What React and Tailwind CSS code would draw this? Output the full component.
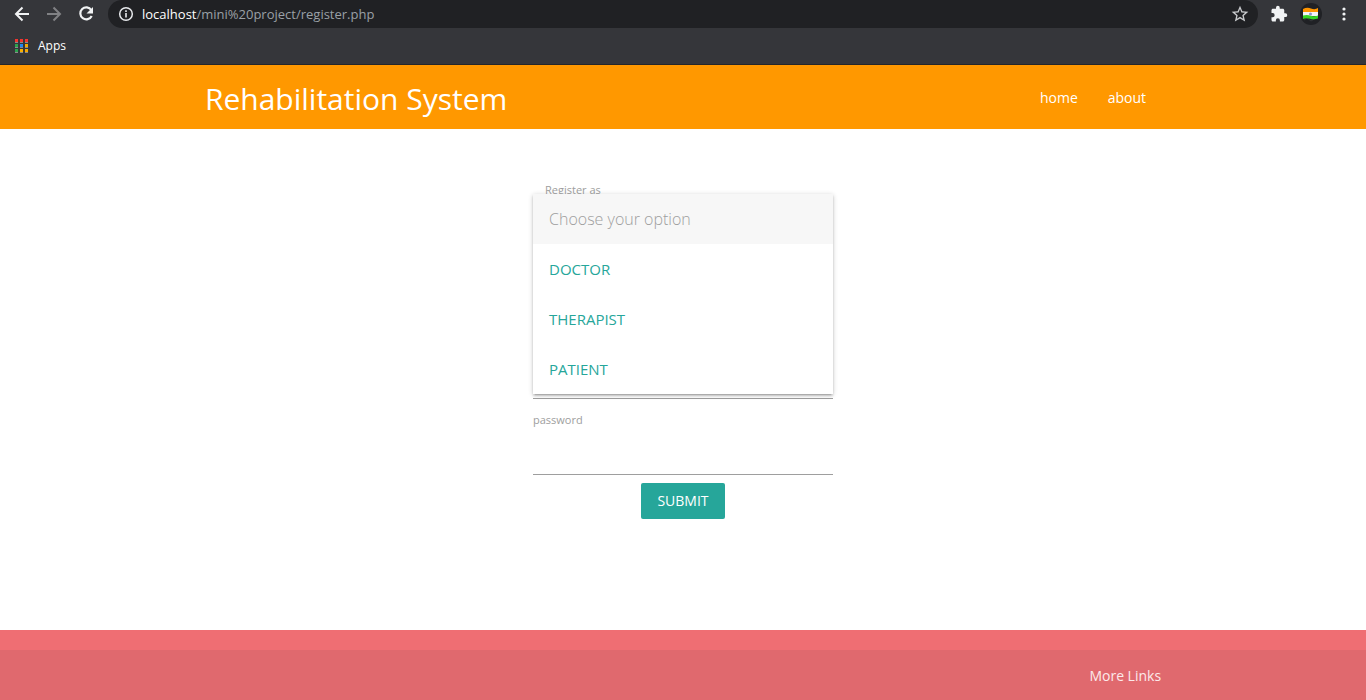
import { useState } from "react";

const appColors = [
  "#f2352f", "#f2352f", "#f2352f",
  "#2ba24c", "#2086f2", "#f5a800",
  "#2ba24c", "#f9b000", "#f5a800",
];

const roles = ["DOCTOR", "THERAPIST", "PATIENT"];

function AppsIcon() {
  return (
    <svg width="14" height="14" viewBox="0 0 14 14" aria-hidden="true">
      {appColors.map((color, i) => (
        <g key={i}>
          <rect x={(i % 3) * 5} y={Math.floor(i / 3) * 5} width="3" height="3" fill={color} />
          <rect x={(i % 3) * 5} y={Math.floor(i / 3) * 5 + 3} width="3" height="1" fill="#8b8b8d" />
        </g>
      ))}
    </svg>
  );
}

function BrowserBar() {
  return (
    <div className="border-b border-[#252629] bg-[#35363a] text-white">
      <div className="flex h-7 items-center pr-3 pl-3">
        <button type="button" aria-label="Back" className="mr-3">
          <svg width="20" height="20" viewBox="0 0 20 20" fill="none" stroke="#f1f3f4" strokeWidth="2">
            <path d="M17 10H4.5M10.5 3.5 4 10l6.500 6.500" />
          </svg>
        </button>
        <button type="button" aria-label="Forward" className="mr-3">
          <svg width="20" height="20" viewBox="0 0 20 20" fill="none" stroke="#808184" strokeWidth="2">
            <path d="M3 10h12.500M9.500 3.500 16 10l-6.500 6.500" />
          </svg>
        </button>
        <button type="button" aria-label="Reload" className="mr-3">
          <svg width="20" height="20" viewBox="0 0 20 20">
            <path d="M15.300 6A6 6 0 1 0 15.700 12" fill="none" stroke="#f1f3f4" strokeWidth="2.200" />
            <path d="M17 3v6.500h-6.500z" fill="#f1f3f4" />
          </svg>
        </button>
        <div className="flex h-7 flex-1 items-center rounded-r-full rounded-l-full bg-[#202124] pr-2 pl-2">
          <svg width="20" height="20" viewBox="0 0 20 20" className="mr-1.5" aria-hidden="true">
            <circle cx="10" cy="10" r="6.300" fill="none" stroke="#e8eaed" strokeWidth="1.500" />
            <path d="M9.200 9h1.600v4.500H9.200zM9.200 6.300h1.600v1.600H9.200z" fill="#e8eaed" />
          </svg>
          <span className="flex-1 pt-0.5 text-[13px] text-[#9aa0a6]">
            <span className="text-white">localhost</span>/mini%20project/register.php
          </span>
          <button type="button" aria-label="Bookmark this page">
            <svg width="20" height="20" viewBox="0 0 24 24" fill="#c8cacd">
              <path d="m22 9.240-7.190-.620L12 2 9.190 8.630 2 9.240l5.460 4.730L5.820 21 12 17.270 18.180 21l-1.630-7.030L22 9.240zM12 15.400l-3.760 2.270 1-4.280-3.320-2.880 4.380-.380L12 6.100l1.710 4.040 4.380.380-3.320 2.880 1 4.280L12 15.400z" />
            </svg>
          </button>
        </div>
        <button type="button" aria-label="Extensions" className="ml-3">
          <svg width="18" height="18" viewBox="0 0 24 24" fill="#f1f3f4">
            <path d="M20.500 11H19V7c0-1.100-.900-2-2-2h-4V3.500a2.500 2.500 0 0 0-5 0V5H4c-1.100 0-2 .900-2 2v3.800h1.500a2.700 2.700 0 0 1 0 5.400H2V20c0 1.100.900 2 2 2h3.800v-1.500a2.700 2.700 0 0 1 5.400 0V22H17c1.100 0 2-.900 2-2v-4h1.500a2.500 2.500 0 0 0 0-5z" />
          </svg>
        </button>
        <button type="button" aria-label="Profile" className="ml-3">
          <svg width="22" height="22" viewBox="0 0 22 22">
            <circle cx="11" cy="11" r="11" fill="#202125" />
            <path d="M4 17l3-2 4 3 5-3" stroke="#34363a" fill="none" />
            <path d="M3 6q4-2 8-.500t7-.500v4.500H3z" fill="#ff9500" />
            <path d="M3 9h15v4H3z" fill="#f2f2f7" />
            <path d="M3 12.500q4-1 8 .200t7-.200v3q-4 1.500-8 .300t-7 .200z" fill="#35d524" />
            <circle cx="10.500" cy="11" r="1.500" fill="#8d93c7" />
          </svg>
        </button>
        <button type="button" aria-label="Menu" className="ml-3">
          <svg width="20" height="20" viewBox="0 0 20 20" fill="#f1f3f4">
            <circle cx="10" cy="5" r="1.600" />
            <circle cx="10" cy="10" r="1.600" />
            <circle cx="10" cy="15" r="1.600" />
          </svg>
        </button>
      </div>
      <div className="flex h-9 items-center px-[15px]">
        <a href="#apps" className="flex items-center gap-[9px] text-xs">
          <AppsIcon />
          Apps
        </a>
      </div>
    </div>
  );
}

function RoleSelect({ open, onClose }) {
  const [role, setRole] = useState("");
  return (
    <div className="relative">
      <label htmlFor="role" className="block pl-3 text-[11px] leading-4 text-[#9e9e9e]">
        Register as
      </label>
      <select
        id="role"
        value={role}
        onChange={(e) => setRole(e.target.value)}
        className={`block h-[49px] w-full appearance-none border-b border-[#9e9e9e] bg-transparent text-base outline-none ${open ? "invisible" : ""}`}
      >
        <option value="" disabled>Choose your option</option>
        {roles.map((name) => (
          <option key={name} value={name}>{name}</option>
        ))}
      </select>
      {open && (
        <ul className="absolute inset-x-0 top-3 z-10 bg-white text-[15px] shadow-[0_2px_2px_0_rgba(0,0,0,0.14),0_3px_1px_-2px_rgba(0,0,0,0.12),0_1px_5px_0_rgba(0,0,0,0.2)]">
          <li className="flex h-[50px] items-center bg-[#f7f7f7] px-4 text-base font-light text-[#9e9e9e]">
            Choose your option
          </li>
          {roles.map((name) => (
            <li key={name}>
              <button
                type="button"
                onClick={() => { setRole(name); onClose(); }}
                className="flex h-[50px] w-full items-center px-4 text-left text-[#26a69a]"
              >
                {name}
              </button>
            </li>
          ))}
        </ul>
      )}
    </div>
  );
}

function Field({ id, label, type, covered }) {
  return (
    <div>
      <label
        htmlFor={id}
        className={`block text-[11px] leading-4 text-[#9e9e9e] ${covered ? "invisible" : ""}`}
      >
        {covered ? "\u00a0" : label}
      </label>
      <input
        id={id}
        type={type}
        aria-label={label}
        className="block h-[47px] w-full border-b border-[#9e9e9e] bg-transparent text-base outline-none"
      />
    </div>
  );
}

function RegisterForm() {
  const [menuOpen, setMenuOpen] = useState(true);
  return (
    <form className="mx-auto flex max-w-[300px] flex-col gap-[13px]" onSubmit={(e) => e.preventDefault()}>
      <RoleSelect open={menuOpen} onClose={() => setMenuOpen(false)} />
      <Field id="name" label="name" type="text" covered={menuOpen} />
      <Field id="email" label="email" type="email" covered={menuOpen} />
      <Field id="password" label="password" type="password" />
      <button type="submit" className="-mt-[5px] h-9 self-center rounded-xs bg-[#26a69a] px-4 text-sm text-white">
        SUBMIT
      </button>
    </form>
  );
}

export default function App() {
  return (
    <div className="flex min-h-screen flex-col bg-white font-['Open_Sans','Noto_Sans',sans-serif]">
      <BrowserBar />
      <header className="bg-[#ff9800] text-white">
        <nav className="mx-auto flex h-16 w-[70%] items-center justify-between pt-0.5">
          <a href="#top" className="text-[30px]">Rehabilitation System</a>
          <div className="flex text-sm">
            <a href="#home" className="px-[15px]">home</a>
            <a href="#about" className="px-[15px]">about</a>
          </div>
        </nav>
      </header>
      <main className="flex-1 px-4 pt-[53px] pb-12">
        <RegisterForm />
      </main>
      <footer className="bg-[#ef6e73] pt-5 text-[#fce9ea]">
        <div className="bg-[#e0696e]">
          <div className="mx-auto flex h-[50px] w-[70%] items-center justify-end pt-0.5 text-sm">
            <a href="#links">More Links</a>
          </div>
        </div>
      </footer>
    </div>
  );
}
